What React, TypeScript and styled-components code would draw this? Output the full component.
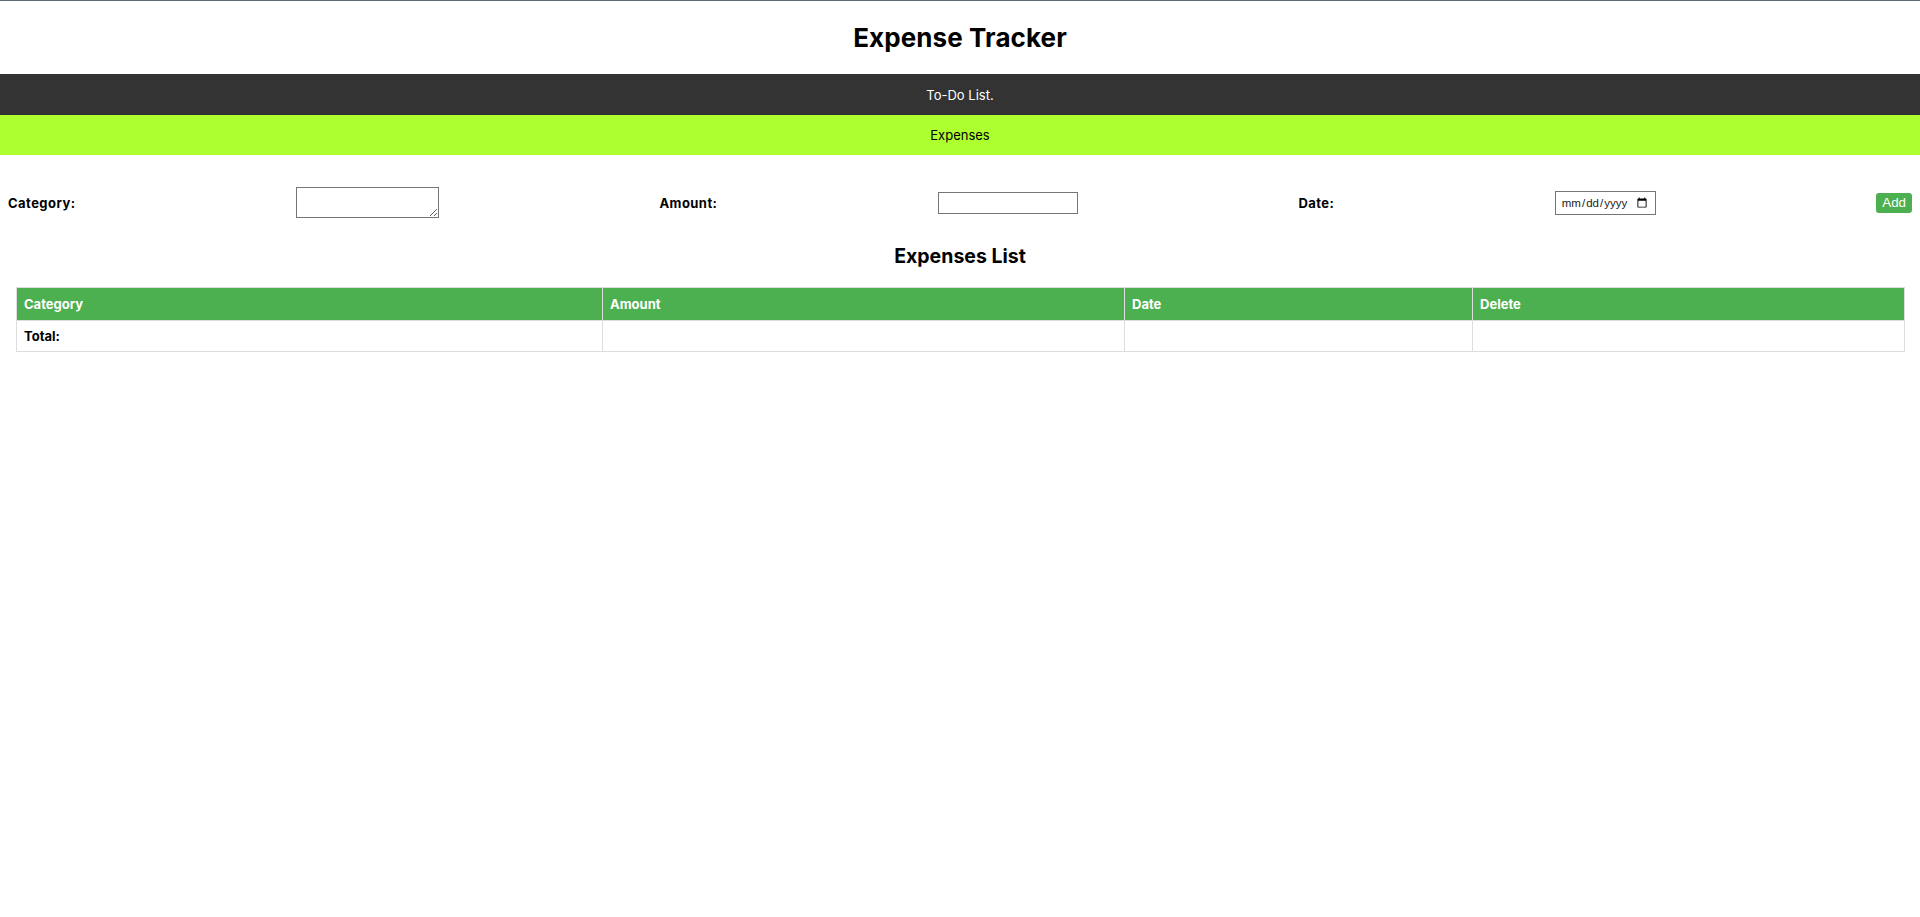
import React from "react";
import styled, { createGlobalStyle } from "styled-components";

const GlobalStyle = createGlobalStyle`
  html, body {
    margin: 0;
    padding: 0;
    background: #ffffff;
  }
  body {
    font-family: Inter, "Open Sans", "Noto Sans", sans-serif;
    color: #000000;
  }
`;

const Page = styled.div`
  min-height: 917px;
  background: #ffffff;
`;

const Header = styled.header`
  border-top: 1px solid #5c6b78;
  height: 73px;
  display: flex;
  align-items: center;
  justify-content: center;
`;

const Title = styled.h1`
  margin: 0;
  font-size: 26px;
  font-weight: 700;
  letter-spacing: 0.1px;
`;

const Nav = styled.nav`
  display: flex;
  flex-direction: column;
`;

const NavLink = styled.a<{ $active?: boolean }>`
  display: flex;
  align-items: center;
  justify-content: center;
  height: ${(p) => (p.$active ? "40px" : "41px")};
  background: ${(p) => (p.$active ? "#adff2f" : "#333333")};
  color: ${(p) => (p.$active ? "#000000" : "#ffffff")};
  font-size: 13px;
  text-decoration: none;
  cursor: pointer;
`;

const Form = styled.form`
  display: flex;
  align-items: center;
  justify-content: space-between;
  padding: 32px 8px 0;
`;

const Label = styled.label`
  font-size: 13px;
  font-weight: 700;
  letter-spacing: 0.45px;
`;

const TextArea = styled.textarea`
  box-sizing: border-box;
  width: 143px;
  height: 31px;
  margin: 0;
  border: 1px solid #767676;
  border-radius: 0;
  padding: 2px;
  font-family: "DejaVu Sans Mono", monospace;
  font-size: 13px;
`;

const TextInput = styled.input`
  box-sizing: border-box;
  width: 140px;
  height: 22px;
  margin: 0;
  border: 1px solid #767676;
  border-radius: 0;
  padding: 1px 2px;
  font-size: 13px;
`;

const DateInput = styled.input`
  box-sizing: border-box;
  width: 101px;
  height: 24px;
  margin: 0;
  border: 1px solid #767676;
  border-radius: 0;
  padding: 1px 5px 1px 5px;
  font-family: "Liberation Sans", Arial, sans-serif;
  font-size: 11.5px;
  color: #222222;
`;

const AddButton = styled.button`
  border: none;
  border-radius: 3px;
  background: #4caf50;
  color: #ffffff;
  font-family: "Liberation Sans", Arial, sans-serif;
  font-size: 13.33px;
  line-height: 16px;
  padding: 2px 6px;
  cursor: pointer;
`;

const SectionTitle = styled.h2`
  margin: 26px 0 19px;
  text-align: center;
  font-size: 19.5px;
  font-weight: 700;
  line-height: 24px;
`;

const TableWrap = styled.div`
  padding: 0 16px;
`;

const Table = styled.table`
  width: 100%;
  border-collapse: collapse;
  table-layout: fixed;
`;

const Th = styled.th`
  background: #4caf50;
  color: #ffffff;
  font-size: 13px;
  font-weight: 700;
  text-align: left;
  padding: 0 7px;
  height: 32px;
  border: 1px solid #dddddd;
`;

const Td = styled.td<{ $bold?: boolean }>`
  font-size: 13px;
  font-weight: ${(p) => (p.$bold ? 700 : 400)};
  text-align: left;
  padding: 0 7px;
  height: 30px;
  border: 1px solid #dddddd;
`;

const columns = [
  { name: "Category", width: 586 },
  { name: "Amount", width: 522 },
  { name: "Date", width: 348 },
  { name: "Delete", width: 432 },
];

export default function App() {
  return (
    <Page>
      <GlobalStyle />
      <Header>
        <Title>Expense Tracker</Title>
      </Header>
      <Nav>
        <NavLink>To-Do List.</NavLink>
        <NavLink $active>Expenses</NavLink>
      </Nav>
      <Form onSubmit={(e) => e.preventDefault()}>
        <Label htmlFor="category">Category:</Label>
        <TextArea id="category" />
        <Label htmlFor="amount">Amount:</Label>
        <TextInput id="amount" type="text" />
        <Label htmlFor="date">Date:</Label>
        <DateInput id="date" type="date" />
        <AddButton type="submit">Add</AddButton>
      </Form>
      <SectionTitle>Expenses List</SectionTitle>
      <TableWrap>
        <Table>
          <colgroup>
            {columns.map((c) => (
              <col key={c.name} style={{ width: `${c.width}px` }} />
            ))}
          </colgroup>
          <thead>
            <tr>
              {columns.map((c) => (
                <Th key={c.name}>{c.name}</Th>
              ))}
            </tr>
          </thead>
          <tbody>
            <tr>
              <Td $bold>Total:</Td>
              <Td />
              <Td />
              <Td />
            </tr>
          </tbody>
        </Table>
      </TableWrap>
    </Page>
  );
}
